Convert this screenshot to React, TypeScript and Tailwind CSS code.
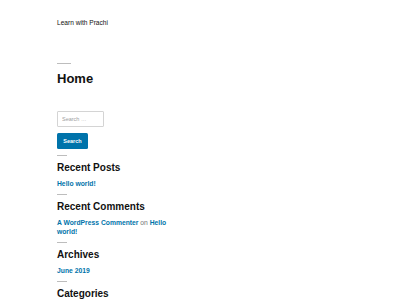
import React from "react";

function Rule({ w = 10 }: { w?: number }) {
  return <div className={w === 14 ? "h-px w-[14px] bg-[#bdbdbd]" : "h-px w-[10px] bg-[#bdbdbd]"} />;
}

function Widget({ title, children }: { title: string; children: React.ReactNode }) {
  return (
    <section className="mt-[6px]">
      <Rule />
      <h2 className="mt-[6px] text-[10px] leading-[12px] font-bold text-[#111]">{title}</h2>
      <div className="mt-[6px] text-[6.75px] leading-[8.3px] font-bold text-[#0073aa]">{children}</div>
    </section>
  );
}

export default function App() {
  return (
    <div className="h-[300px] w-[400px] overflow-hidden bg-white pl-[57px] font-['Liberation_Sans',Arial,sans-serif] text-[#111]">
      <header className="pt-[19px] text-[6.6px] leading-[8px]">Learn with Prachi</header>
      <main className="mt-[36px]">
        <Rule w={14} />
        <h1 className="mt-[7px] text-[13px] leading-[16px] font-bold">Home</h1>
      </main>
      <aside className="w-[120px]">
        <form className="mt-[24px]" onSubmit={(e) => e.preventDefault()}>
          <input
            type="search"
            placeholder="Search …"
            className="block h-[16px] w-[47px] rounded-[1px] border border-[#d4d4d4] bg-white px-[4px] text-[5.5px] text-[#111] outline-none placeholder:text-[#a0a0a0]"
          />
          <button
            type="submit"
            className="mt-[6px] flex h-[16px] w-[31px] items-center justify-center rounded-[1.5px] bg-[#0073aa] text-[5.5px] font-bold text-white"
          >
            Search
          </button>
        </form>
        <Widget title="Recent Posts">
          <a href="#">Hello world!</a>
        </Widget>
        <Widget title="Recent Comments">
          <a href="#">A WordPress Commenter</a>{" "}
          <span className="font-normal text-[#767676]">on</span>{" "}
          <a href="#">Hello world!</a>
        </Widget>
        <Widget title="Archives">
          <a href="#">June 2019</a>
        </Widget>
        <Widget title="Categories">
          <a href="#">Uncategorized</a>
        </Widget>
      </aside>
    </div>
  );
}
